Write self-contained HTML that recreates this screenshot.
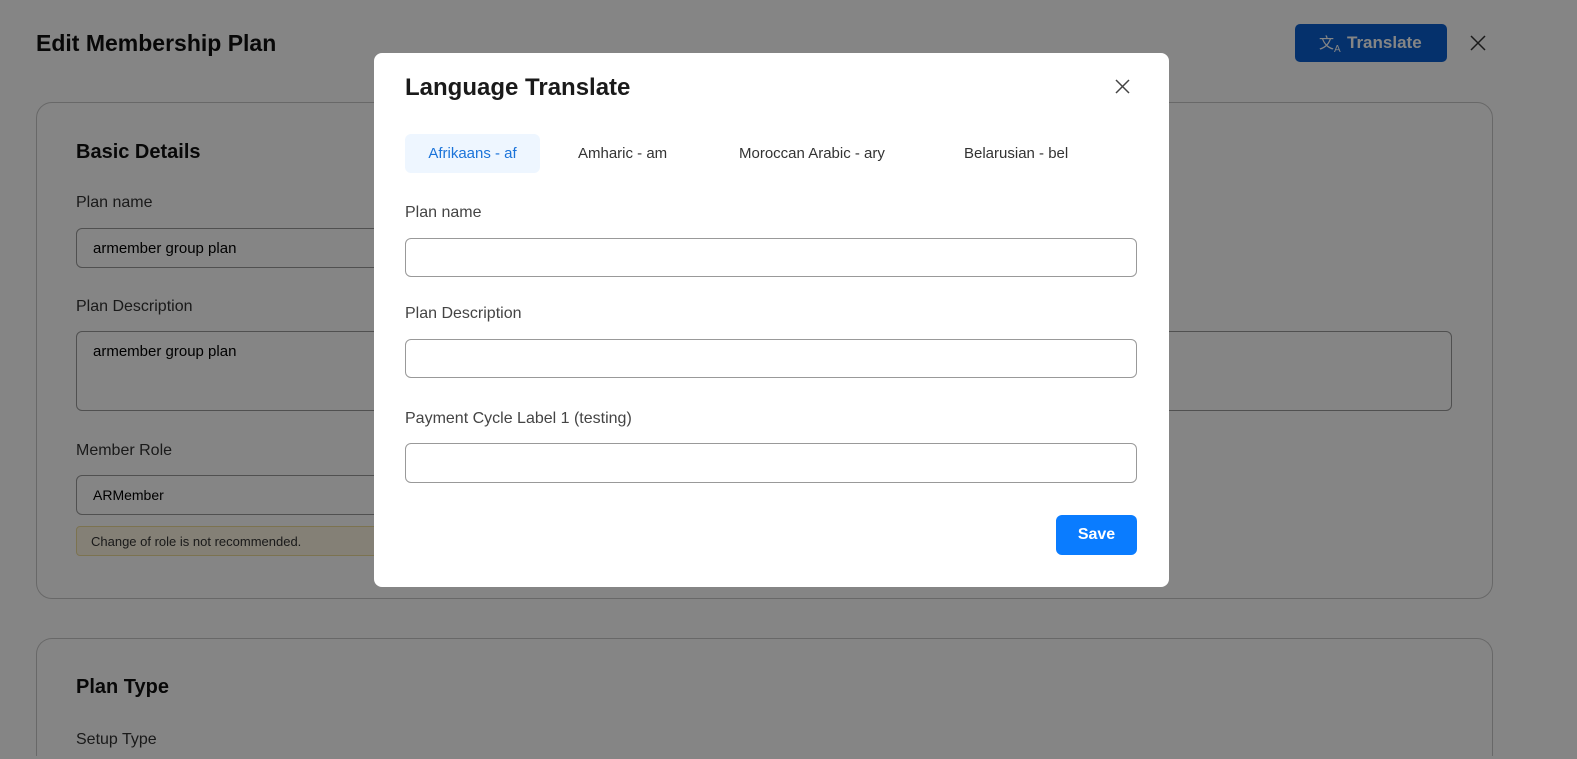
<!DOCTYPE html>
<html style="overflow:hidden"><head><style>
*{box-sizing:border-box;margin:0;padding:0}
html,body{width:1577px;height:759px;overflow:hidden}
body{font-family:"Liberation Sans",sans-serif;background:#fff;position:relative}
.a{position:absolute}
.lbl{font-size:16px;color:#333}
.inp{border:1px solid #999;border-radius:6px;background:#fff}
#ov{position:fixed;left:0;top:0;width:1577px;height:759px;background:rgba(0,0,0,.48)}
.card{border:1px solid #c8c8c8;border-radius:16px}
</style></head><body>
<div class="a" style="left:36px;top:30px;font-size:23px;font-weight:bold;color:#111">Edit Membership Plan</div>
<div class="a" style="left:1295px;top:24px;width:152px;height:38px;background:#0a5fcf;border-radius:5px;color:#fff;font-size:17px;font-weight:bold;line-height:38px;padding-left:52px">Translate</div>
<div class="a" style="left:1319px;top:32px;color:#fff;font-size:15px">文<sub style="font-size:10px">A</sub></div>
<svg class="a" style="left:1470px;top:35px" width="16" height="16"><path d="M1 1L15 15M15 1L1 15" stroke="#333" stroke-width="1.5"/></svg>
<div class="a card" style="left:36px;top:102px;width:1457px;height:497px"></div>
<div class="a card" style="left:36px;top:638px;width:1457px;height:118px;border-bottom:none;border-radius:16px 16px 0 0"></div>
<div class="a" style="left:76px;top:141px;font-size:20px;font-weight:bold;color:#111">Basic Details</div>
<div class="a lbl" style="left:76px;top:194px">Plan name</div>
<div class="a inp" style="left:76px;top:228px;width:400px;height:40px;padding:11px 16px;font-size:15px">armember group plan</div>
<div class="a lbl" style="left:76px;top:298px">Plan Description</div>
<div class="a inp" style="left:76px;top:331px;width:1376px;height:80px;padding:11px 16px;font-size:15px">armember group plan</div>
<div class="a lbl" style="left:76px;top:442px">Member Role</div>
<div class="a inp" style="left:76px;top:475px;width:400px;height:40px;padding:11px 16px;font-size:14px">ARMember</div>
<div class="a" style="left:76px;top:526px;width:400px;height:30px;background:#fdf6e3;border:1px solid #eedc9a;border-radius:4px;font-size:13px;padding:7px 14px;color:#333">Change of role is not recommended.</div>
<div class="a" style="left:76px;top:676px;font-size:20px;font-weight:bold;color:#111">Plan Type</div>
<div class="a lbl" style="left:76px;top:731px">Setup Type</div>
<div id="ov"></div>
<div class="a" style="left:374px;top:53px;width:795px;height:534px;background:#fff;border-radius:8px">
<div class="a" style="left:31px;top:21px;font-size:24px;font-weight:bold;color:#1a1a1a">Language Translate</div>
<svg class="a" style="left:741px;top:26px" width="15" height="15"><path d="M1 1L14 14M14 1L1 14" stroke="#444" stroke-width="1.5"/></svg>
<div class="a" style="left:31px;top:81px;width:135px;height:39px;background:#eef6ff;border-radius:6px;color:#1a73d9;font-size:15px;line-height:39px;text-align:center">Afrikaans - af</div>
<div class="a" style="left:204px;top:81px;font-size:15px;line-height:39px;color:#333">Amharic - am</div>
<div class="a" style="left:365px;top:81px;font-size:15px;line-height:39px;color:#333">Moroccan Arabic - ary</div>
<div class="a" style="left:590px;top:81px;font-size:15px;line-height:39px;color:#333">Belarusian - bel</div>
<div class="a lbl" style="left:31px;top:151px;color:#444">Plan name</div>
<div class="a inp" style="left:31px;top:185px;width:732px;height:39px"></div>
<div class="a lbl" style="left:31px;top:252px;color:#444">Plan Description</div>
<div class="a inp" style="left:31px;top:286px;width:732px;height:39px"></div>
<div class="a lbl" style="left:31px;top:357px;color:#444">Payment Cycle Label 1 (testing)</div>
<div class="a inp" style="left:31px;top:390px;width:732px;height:40px"></div>
<div class="a" style="left:682px;top:462px;width:81px;height:40px;background:#0a7cff;border-radius:6px;color:#fff;font-weight:bold;font-size:16px;line-height:40px;text-align:center">Save</div>
</div>
</body></html>
